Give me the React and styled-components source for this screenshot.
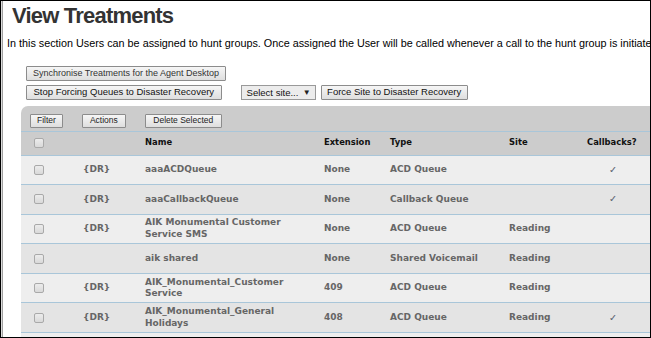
import React from "react";
import styled, { createGlobalStyle } from "styled-components";

const GlobalStyle = createGlobalStyle`
  html, body { margin: 0; padding: 0; background: #fff; }
  body { font-family: "Liberation Sans", Arial, sans-serif; }
  * { box-sizing: border-box; }
`;

const Frame = styled.div`
  width: 651px;
  height: 338px;
  border: 1px solid #000;
  box-shadow: inset 1px 0 0 #dcdcdc, inset 2px 0 0 #a0a0a0;
  overflow: hidden;
  background: #fff;
`;

const Page = styled.div`
  display: flex;
  flex-direction: column;
  padding-left: 6px;
  width: 720px;
`;

const Title = styled.h1`
  margin: 2px 0 0 5px;
  font-family: "Liberation Sans", Arial, sans-serif;
  font-weight: bold;
  font-size: 22px;
  line-height: 26px;
  letter-spacing: -0.8px;
  color: #333;
`;

const Intro = styled.p`
  margin: 8px 0 0 0;
  font-size: 10.8px;
  line-height: 12px;
  color: #000;
  white-space: nowrap;
`;

const ButtonRow = styled.div`
  display: flex;
  align-items: center;
  margin: ${(p) => p.$mt}px 0 0 19px;
`;

const Button = styled.button`
  height: ${(p) => p.$h || 15}px;
  padding: 0 ${(p) => p.$px || 6}px;
  margin-right: ${(p) => p.$mr || 0}px;
  border: 1px solid #8c8c8c;
  border-radius: 1px;
  background: linear-gradient(#f6f6f6, #dedede);
  font-family: "Liberation Sans", Arial, sans-serif;
  font-size: ${(p) => p.$fs || 9}px;
  line-height: 1;
  color: ${(p) => p.$color || "#222"};
  white-space: nowrap;
`;

const Select = styled.div`
  display: flex;
  align-items: center;
  justify-content: space-between;
  width: 75px;
  height: 15px;
  margin-right: 5px;
  padding: 0 4px 0 5px;
  border: 1px solid #999;
  background: #ececec;
  font-size: 9.5px;
  color: #111;
  white-space: nowrap;
`;

const Arrow = styled.span`
  font-size: 8px;
  color: #222;
`;

const Panel = styled.div`
  margin: 6px 0 0 14px;
  background: #cccccc;
  border-top-left-radius: 7px;
`;

const Toolbar = styled.div`
  display: flex;
  align-items: center;
  gap: 19px;
  padding: 8px 0 3px 9px;
`;

const Row = styled.div`
  display: grid;
  grid-template-columns: 62px 62px 179px 66px 119px 78px 52px 1fr;
  align-items: center;
  min-height: ${(p) => (p.$head ? 25 : 29.6)}px;
  background: ${(p) => p.$bg};
  border-bottom: 1px solid #a9c6d9;
  border-top: ${(p) => (p.$head ? "1px solid #a9c6d9" : "none")};
  font-family: "DejaVu Sans", Verdana, sans-serif;
  font-weight: bold;
  font-size: ${(p) => (p.$head ? 8.4 : 9)}px;
  line-height: 11.5px;
  color: ${(p) => (p.$head ? "#111" : "#666")};
`;

const Cell = styled.div`
  padding-left: ${(p) => p.$pl || 0}px;
  padding-right: ${(p) => p.$pr || 0}px;
  text-align: ${(p) => p.$align || "left"};
`;

const Check = styled.span`
  display: block;
  width: 10px;
  height: 10px;
  border: 1px solid #a9a9a9;
  border-radius: 2px;
  background: linear-gradient(#ececec, #d9d9d9);
`;

const Tick = styled.span`
  font-family: "DejaVu Sans", sans-serif;
  font-weight: bold;
  font-size: 9.5px;
  color: #5a6270;
`;

const rows = [
  { dr: true, name: "aaaACDQueue", ext: "None", type: "ACD Queue", site: "", cb: true },
  { dr: true, name: "aaaCallbackQueue", ext: "None", type: "Callback Queue", site: "", cb: true },
  { dr: true, name: "AIK Monumental Customer Service SMS", ext: "None", type: "ACD Queue", site: "Reading", cb: false },
  { dr: false, name: "aik shared", ext: "None", type: "Shared Voicemail", site: "Reading", cb: false },
  { dr: true, name: "AIK_Monumental_Customer Service", ext: "409", type: "ACD Queue", site: "Reading", cb: false },
  { dr: true, name: "AIK_Monumental_General Holidays", ext: "408", type: "ACD Queue", site: "Reading", cb: true },
  { dr: true, name: "AIK_Sales", ext: "407", type: "ACD Queue", site: "Reading", cb: false },
];

export default function App() {
  return (
    <>
      <GlobalStyle />
      <Frame>
        <Page>
          <Title>View Treatments</Title>
          <Intro>
            In this section Users can be assigned to hunt groups. Once assigned the User will be called whenever a call to the hunt group is initiated.
          </Intro>
          <ButtonRow $mt={16.5}>
            <Button $fs={9} $px={6} $color="#333">Synchronise Treatments for the Agent Desktop</Button>
          </ButtonRow>
          <ButtonRow $mt={4}>
            <Button $fs={9.5} $px={6.5} $mr={19} $color="#111">Stop Forcing Queues to Disaster Recovery</Button>
            <Select>
              <span>Select site...</span>
              <Arrow>▼</Arrow>
            </Select>
            <Button $fs={9.5} $px={5.5} $color="#111">Force Site to Disaster Recovery</Button>
          </ButtonRow>
          <Panel>
            <Toolbar>
              <Button $h={14} $fs={8.5} $px={6}>Filter</Button>
              <Button $h={14} $fs={8.5} $px={7}>Actions</Button>
              <Button $h={14} $fs={8.5} $px={7.5}>Delete Selected</Button>
            </Toolbar>
            <Row $head $bg="#cccccc">
              <Cell $pl={13}><Check /></Cell>
              <Cell />
              <Cell>Name</Cell>
              <Cell>Extension</Cell>
              <Cell>Type</Cell>
              <Cell>Site</Cell>
              <Cell>Callbacks?</Cell>
              <Cell />
            </Row>
            {rows.map((r, i) => (
              <Row key={i} $bg={i % 2 === 0 ? "#eeeeee" : "#e4e4e4"}>
                <Cell $pl={13}><Check /></Cell>
                <Cell>{r.dr ? "{DR}" : ""}</Cell>
                <Cell $pr={29}>{r.name}</Cell>
                <Cell>{r.ext}</Cell>
                <Cell>{r.type}</Cell>
                <Cell>{r.site}</Cell>
                <Cell $align="center">{r.cb ? <Tick>✓</Tick> : ""}</Cell>
                <Cell />
              </Row>
            ))}
          </Panel>
        </Page>
      </Frame>
    </>
  );
}
